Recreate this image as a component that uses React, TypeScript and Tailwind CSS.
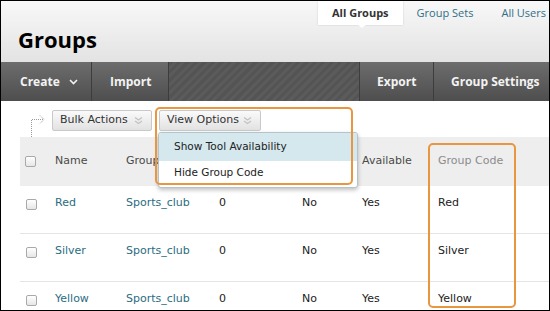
const groups = ["Red", "Silver", "Yellow"];

function Checkbox() {
	return (
		<span className="block h-[11px] w-[11px] rounded-[2px] border border-[#a9a9a9] bg-linear-to-b from-white to-[#e6e6e6]" />
	);
}

function DoubleChevron() {
	return (
		<svg width="9" height="9" viewBox="0 0 9 9" fill="none" stroke="#c2c2c2" strokeWidth="1.2">
			<path d="M1 1.5 4.5 4 8 1.5" />
			<path d="M1 5 4.5 7.5 8 5" />
		</svg>
	);
}

function ToolButton({ label, width }: { label: string; width: string }) {
	return (
		<button
			className={`flex h-[21px] ${width} items-center justify-between rounded-[2px] border border-[#c9c9c9] bg-linear-to-b from-[#fafafa] to-[#e2e2e2] pl-[7px] pr-[8px] text-[11px] text-[#333]`}
		>
			<span>{label}</span>
			<DoubleChevron />
		</button>
	);
}

export default function App() {
	return (
		<div className="relative h-[311px] w-[550px] overflow-hidden border border-black bg-white font-['DejaVu_Sans',sans-serif]">
			{/* page header */}
			<div className="flex h-[61px] flex-col bg-linear-to-b from-[#f8f8f8] to-[#e3e3e3] font-['Open_Sans',sans-serif]">
				<div className="flex h-[24px] items-center pl-[317px] text-[11px]">
					<div className="relative flex h-full items-center bg-white px-[14px] font-bold text-[#333] shadow-[0_0_2px_rgba(0,0,0,0.15)]">
						All Groups
						<span className="absolute left-[39px] top-[23px] h-0 w-0 border-x-[5px] border-t-[4px] border-x-transparent border-t-white" />
					</div>
					<div className="px-[14px] text-[#2f6f86]">Group Sets</div>
					<div className="pl-[14px] text-[#2f6f86]">All Users</div>
				</div>
				<h1 className="mt-[3px] pl-[17px] text-[22px] leading-[22px] font-bold text-black">Groups</h1>
			</div>

			{/* action bar */}
			<div className="flex h-[39px] font-['Open_Sans',sans-serif] text-[12px] font-bold text-[#f3f3f3]">
				<div className="flex w-[91px] items-center gap-[9px] border-r border-[#3d3d3d] bg-linear-to-b from-[#6d6d6d] to-[#4e4e4e] pl-[19px]">
					Create
					<svg width="9" height="6" viewBox="0 0 9 6" fill="none" stroke="#f3f3f3" strokeWidth="1.6">
						<path d="M1 1 4.5 4.5 8 1" />
					</svg>
				</div>
				<div className="flex w-[77px] items-center border-r border-[#3d3d3d] bg-linear-to-b from-[#6d6d6d] to-[#4e4e4e] pl-[18px]">
					Import
				</div>
				<div className="flex-1 bg-[repeating-linear-gradient(135deg,#545454_0px,#545454_3px,#5b5b5b_3px,#5b5b5b_6px)]" />
				<div className="flex w-[74px] items-center border-l border-[#3d3d3d] bg-linear-to-b from-[#6d6d6d] to-[#4e4e4e] pl-[17px]">
					Export
				</div>
				<div className="flex w-[116px] items-center border-l border-[#3d3d3d] bg-linear-to-b from-[#6d6d6d] to-[#4e4e4e] pl-[17px]">
					Group Settings
				</div>
			</div>

			{/* toolbar */}
			<div className="flex h-[36px] items-start pl-[24px] pt-[9px]">
				<svg width="22" height="27" viewBox="0 0 22 27" fill="none" stroke="#9a9a9a" strokeWidth="1" strokeDasharray="1 1">
					<path d="M6.5 27V9.5H18" />
					<path d="M15 5.5 19 9.5 15 13.5" />
				</svg>
				<div className="ml-[5px] flex gap-[7px]">
					<ToolButton label="Bulk Actions" width="w-[100px]" />
					<ToolButton label="View Options" width="w-[102px]" />
				</div>
			</div>

			{/* table */}
			<div className="ml-[19px] flex h-[173px] flex-col text-[11px]">
				<div className="grid h-[49px] grid-cols-[35px_71px_93px_83px_60px_76px_1fr] items-center bg-[#eeeeee] text-[#4a4a4a]">
					<div className="pl-[5px]">
						<Checkbox />
					</div>
					<div>Name</div>
					<div>Group Set</div>
					<div>Members</div>
					<div>Self-Enroll</div>
					<div>Available</div>
					<div className="text-[#8c8c8c]">Group Code</div>
				</div>
				{groups.map((g, i) => (
					<div
						key={g}
						className={`grid grid-cols-[35px_71px_93px_83px_60px_76px_1fr] items-start pt-[10px] leading-[14px] text-[#222] ${
							i === 0 ? "h-[47px]" : i === 1 ? "h-[48px] border-t border-[#e4e4e4]" : "flex-1 border-t border-[#e4e4e4]"
						}`}
					>
						<div className="pl-[6px] pt-[3px]">
							<Checkbox />
						</div>
						<div className="text-[#2c6c81]">{g}</div>
						<div className="text-[#2c6c81]">Sports_club</div>
						<div>0</div>
						<div>No</div>
						<div>Yes</div>
						<div>{g}</div>
					</div>
				))}
			</div>

			{/* view options menu */}
			<div className="absolute left-[157px] top-[131px] flex h-[56px] w-[200px] flex-col overflow-hidden rounded-[3px] border border-[#b4c4ca] bg-white text-[10.5px] text-[#222] shadow-[0_2px_4px_rgba(0,0,0,0.25)]">
				<div className="flex h-[28px] items-center bg-[#d5e8ee] pl-[15px]">Show Tool Availability</div>
				<div className="flex h-[24px] items-center pl-[15px]">Hide Group Code</div>
			</div>

			{/* callouts */}
			<div className="absolute left-[154px] top-[106px] h-[78px] w-[198px] rounded-[5px] border-2 border-[#e8963f]" />
			<div className="absolute left-[427px] top-[142px] h-[165px] w-[88px] rounded-[5px] border-2 border-[#e8963f]" />
		</div>
	);
}
